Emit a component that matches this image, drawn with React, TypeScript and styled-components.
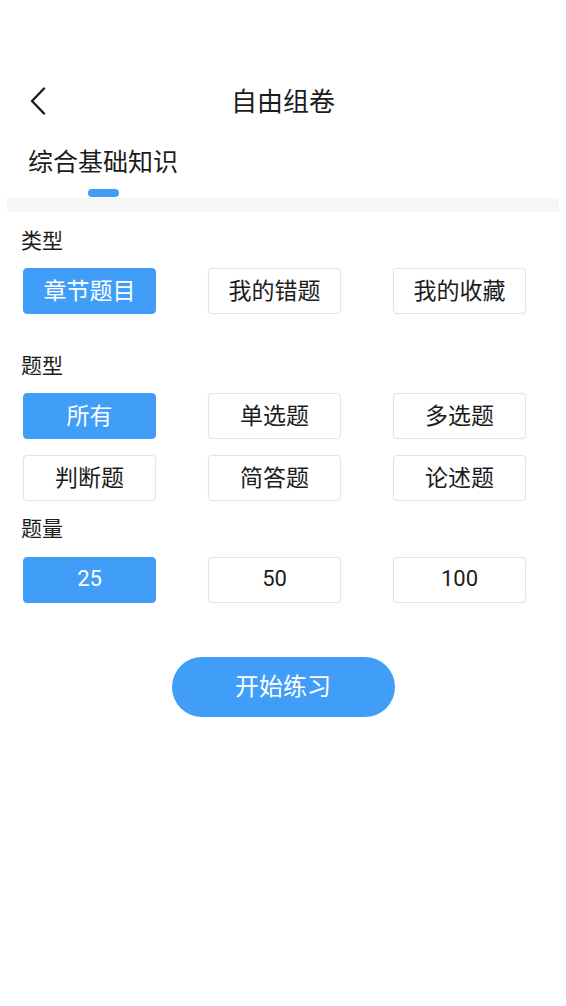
import React, { useState } from "react";
import styled, { createGlobalStyle } from "styled-components";

const Global = createGlobalStyle`
  html, body { margin: 0; padding: 0; background: #ffffff; }
  body { font-family: "Noto Sans CJK SC", "Noto Sans", Roboto, sans-serif; color: #222; }
  * { box-sizing: border-box; }
`;

const Page = styled.div`
  width: 566px;
  min-height: 1006px;
  background: #fff;
  display: flex;
  flex-direction: column;
`;

const Header = styled.div`
  margin-top: 73px;
  height: 56px;
  position: relative;
  display: flex;
  align-items: center;
  justify-content: center;
`;

const BackBtn = styled.button`
  position: absolute;
  left: 24px;
  top: 12px;
  width: 28px;
  height: 32px;
  border: none;
  background: transparent;
  padding: 0;
  display: flex;
  align-items: center;
  justify-content: center;
`;

const Title = styled.div`
  font-size: 26px;
  line-height: 34px;
  color: #1c1c1c;
  padding-bottom: 2px;
`;

const Tabs = styled.div`
  display: flex;
  padding-left: 28px;
  margin-top: 16px;
`;

const Tab = styled.div`
  display: flex;
  flex-direction: column;
  align-items: center;
`;

const TabText = styled.div`
  font-size: 25px;
  line-height: 34px;
  color: #1c1c1c;
  margin-top: -2px;
  margin-bottom: 2px;
`;

const Indicator = styled.div`
  margin-top: 10px;
  width: 31px;
  height: 8px;
  border-radius: 4px;
  background: #409cf8;
`;

const Band = styled.div`
  margin: 1px 7px 0;
  height: 14px;
  background: #f6f6f6;
`;

const Label = styled.div<{ $top: number }>`
  margin-top: ${(p) => p.$top}px;
  padding-left: 21px;
  font-size: 21px;
  line-height: 28px;
  color: #1c1c1c;
  position: relative;
  top: -2px;
`;

const Grid = styled.div<{ $top: number }>`
  margin-top: ${(p) => p.$top}px;
  padding-left: 23px;
  display: grid;
  grid-template-columns: repeat(3, 133px);
  column-gap: 52px;
  row-gap: 16px;
`;

const Option = styled.button<{ $active: boolean }>`
  height: 46px;
  border-radius: 4px;
  border: 1px solid ${(p) => (p.$active ? "#409ef9" : "#e4e4e4")};
  background: ${(p) => (p.$active ? "#409ef9" : "#fff")};
  color: ${(p) => (p.$active ? "#fff" : "#1c1c1c")};
  font-family: "Noto Sans CJK SC", sans-serif;
  font-size: 23px;
  line-height: 30px;
  padding: 0 0 4px;
  box-shadow: ${(p) => (p.$active ? "none" : "0 0 2px rgba(0,0,0,0.06)")};
`;

const NumOption = styled(Option)`
  font-family: Roboto, "Noto Sans", sans-serif;
  font-size: 22px;
  padding: 0 0 2px;
`;

const StartWrap = styled.div`
  margin-top: 54px;
  display: flex;
  justify-content: center;
`;

const StartBtn = styled.button`
  width: 223px;
  height: 60px;
  border-radius: 30px;
  border: none;
  background: #409ef9;
  color: #fff;
  font-family: "Noto Sans CJK SC", sans-serif;
  font-size: 24px;
  line-height: 32px;
  padding: 0 0 4px;
`;

const types = ["章节题目", "我的错题", "我的收藏"];
const kinds = ["所有", "单选题", "多选题", "判断题", "简答题", "论述题"];
const counts = ["25", "50", "100"];

export default function App() {
  const [t, setT] = useState(0);
  const [k, setK] = useState(0);
  const [c, setC] = useState(0);
  return (
    <Page>
      <Global />
      <Header>
        <BackBtn aria-label="back">
          <svg width="18" height="28" viewBox="0 0 18 28" fill="none">
            <path d="M15 1.5 L3 14 L15 26.5" stroke="#1c1c1c" strokeWidth="2.4" strokeLinecap="round" strokeLinejoin="round" />
          </svg>
        </BackBtn>
        <Title>自由组卷</Title>
      </Header>
      <Tabs>
        <Tab>
          <TabText>综合基础知识</TabText>
          <Indicator />
        </Tab>
      </Tabs>
      <Band />
      <Label $top={15}>类型</Label>
      <Grid $top={13}>
        {types.map((x, i) => (
          <Option key={x} $active={i === t} onClick={() => setT(i)}>{x}</Option>
        ))}
      </Grid>
      <Label $top={38}>题型</Label>
      <Grid $top={13}>
        {kinds.map((x, i) => (
          <Option key={x} $active={i === k} onClick={() => setK(i)}>{x}</Option>
        ))}
      </Grid>
      <Label $top={14}>题量</Label>
      <Grid $top={14}>
        {counts.map((x, i) => (
          <NumOption key={x} $active={i === c} onClick={() => setC(i)}>{x}</NumOption>
        ))}
      </Grid>
      <StartWrap>
        <StartBtn>开始练习</StartBtn>
      </StartWrap>
    </Page>
  );
}
